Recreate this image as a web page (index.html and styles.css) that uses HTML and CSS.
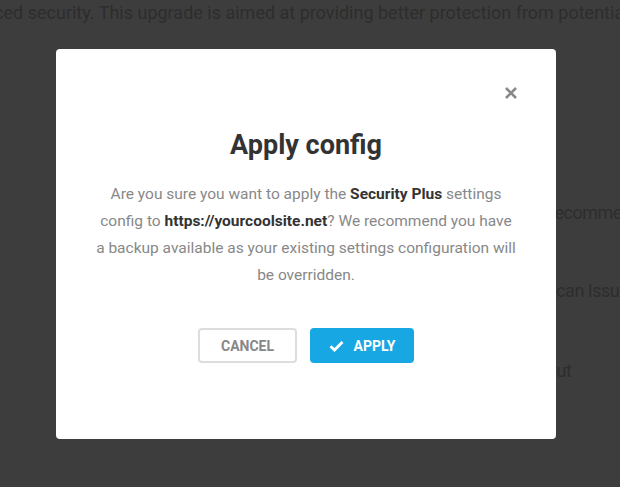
FILE: index.html
```html
<!DOCTYPE html>
<html lang="en">
<head>
<meta charset="utf-8">
<title>Apply config</title>
<link rel="stylesheet" href="styles.css">
</head>
<body>
<div class="page">
  <p class="page-line intro">enhanced security. This upgrade is aimed at providing better protection from potential threats.</p>
  <p class="page-line row row-1">recommendations</p>
  <p class="page-line row row-2">Scan Issues</p>
  <p class="page-line row row-3">About</p>
</div>
<div class="overlay">
  <div class="modal">
    <button class="close" aria-label="Close">
      <svg width="14" height="14" viewBox="0 0 14 14"><path d="M2 2 L12 12 M12 2 L2 12" stroke="#888" stroke-width="2.6" stroke-linecap="butt"/></svg>
    </button>
    <h1 class="title">Apply config</h1>
    <p class="desc">Are you sure you want to apply the <strong>Security Plus</strong> settings config to <strong>https://yourcoolsite.net</strong>? We recommend you have a backup available as your existing settings configuration will be overridden.</p>
    <div class="actions">
      <button class="btn btn-cancel">CANCEL</button>
      <button class="btn btn-apply">
        <svg width="15" height="12" viewBox="0 0 15 12"><path d="M1.5 6.2 L5.5 10 L13.5 2" fill="none" stroke="#fff" stroke-width="2.8"/></svg>
        APPLY
      </button>
    </div>
  </div>
</div>
</body>
</html>
```
FILE: styles.css
```css
html, body {
  margin: 0;
  padding: 0;
}
body {
  width: 620px;
  height: 487px;
  overflow: hidden;
  background: #3d3d3d;
  font-family: Roboto, "Liberation Sans", sans-serif;
  position: relative;
}
.page {
  white-space: nowrap;
  overflow: hidden;
}
.page-line {
  margin: 0;
  font-size: 18px;
  line-height: 26px;
  color: #2d2d2d;
}
.intro {
  text-indent: -55px;
}
.row {
  padding-left: 549px;
  letter-spacing: -0.5px;
}
.row-1 { margin-top: 174px; }
.row-2 { margin-top: 52px; padding-left: 546px; }
.row-3 { margin-top: 54px; padding-left: 526px; }

.overlay {
  position: absolute;
  inset: 0;
  padding: 49px 0 0 56px;
}
.modal {
  position: relative;
  box-sizing: border-box;
  width: 500px;
  height: 390px;
  background: #fff;
  border-radius: 4px;
  padding: 79px 39px 0;
  text-align: center;
}
.close {
  position: absolute;
  top: 37px;
  right: 38px;
  width: 14px;
  height: 14px;
  padding: 0;
  border: 0;
  background: none;
  display: flex;
}
.title {
  margin: 0;
  font-size: 27px;
  line-height: 35px;
  font-weight: 700;
  color: #333;
}
.desc {
  margin: 18px 0 0;
  font-size: 15.5px;
  line-height: 27px;
  color: #888;
}
.desc strong {
  color: #333;
  font-weight: 700;
}
.actions {
  margin-top: 39px;
  display: flex;
  justify-content: center;
  gap: 13px;
}
.btn {
  box-sizing: border-box;
  height: 35px;
  border-radius: 4px;
  font-family: Roboto, "Liberation Sans", sans-serif;
  font-size: 14px;
  font-weight: 700;
  display: flex;
  align-items: center;
  justify-content: center;
  gap: 10px;
  padding: 0;
}
.btn-cancel {
  width: 99px;
  background: #fff;
  border: 2px solid #ddd;
  color: #888;
}
.btn-apply {
  width: 104px;
  background: #17a8e3;
  border: 0;
  color: #fff;
}
```
